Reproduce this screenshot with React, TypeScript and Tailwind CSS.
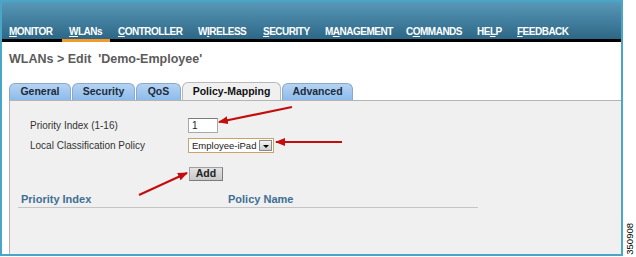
import React from "react";

const navItems: { pre: string; u: string; post: string; w: number }[] = [
  { pre: "", u: "M", post: "ONITOR", w: 60 },
  { pre: "", u: "W", post: "LANs", w: 49 },
  { pre: "", u: "C", post: "ONTROLLER", w: 80 },
  { pre: "W", u: "I", post: "RELESS", w: 65 },
  { pre: "", u: "S", post: "ECURITY", w: 62 },
  { pre: "M", u: "A", post: "NAGEMENT", w: 81 },
  { pre: "C", u: "O", post: "MMANDS", w: 71 },
  { pre: "HE", u: "L", post: "P", w: 40 },
  { pre: "", u: "F", post: "EEDBACK", w: 70 },
];

const tabs = [
  { label: "General", w: 62 },
  { label: "Security", w: 63 },
  { label: "QoS", w: 45 },
  { label: "Policy-Mapping", w: 99, active: true },
  { label: "Advanced", w: 71 },
];

export default function App() {
  return (
    <div
      className="w-[636px] h-[257px] bg-white flex relative overflow-hidden"
      style={{ fontFamily: '"Liberation Sans", Arial, sans-serif' }}
    >
      <div className="w-[623px] h-[256px] border-2 border-[#4aa6c6] flex flex-col bg-white">
        {/* header */}
        <div className="h-[37px] bg-gradient-to-b from-[#5898b8] to-[#2e6786] flex items-end pl-[7px] pb-[1px]">
          {navItems.map((n, i) => (
            <span
              key={i}
              className="text-white font-bold text-[10px] tracking-[-0.5px] leading-[13px] shrink-0 whitespace-nowrap"
              style={{ width: n.w }}
            >
              {n.pre}
              <span className="underline underline-offset-[1px]">{n.u}</span>
              {n.post}
            </span>
          ))}
        </div>
        <div className="h-[3px] bg-black flex">
          <div className="w-[60px]" />
          <div className="w-[48px] bg-[#f39a2a]" />
        </div>
        {/* title */}
        <div className="h-[41px] flex items-center pl-[7px] pb-[7px]">
          <span className="text-[12.5px] font-bold text-[#5b5b5b] whitespace-pre">
            {"WLANs > Edit  'Demo-Employee'"}
          </span>
        </div>
        {/* tabs */}
        <div className="flex pl-[7px] h-[17px] items-end">
          {tabs.map((t) => (
            <div
              key={t.label}
              className={
                "h-[17px] rounded-t-[6px] border border-b-0 flex items-center justify-center text-[10.5px] font-bold text-[#1c2c3c] shrink-0 mr-[1px] " +
                (t.active
                  ? "bg-[#f0f0f0] border-[#b8b8b8] h-[18px] text-[#111]"
                  : "bg-gradient-to-b from-[#b5d3f3] to-[#8dbbeb] border-[#8aa8c8]")
              }
              style={{ width: t.w }}
            >
              {t.label}
            </div>
          ))}
        </div>
        {/* content */}
        <div className="flex-1 ml-[7px] bg-[#f0f0f0] border-l border-t border-[#b4b4b4] flex flex-col">
          <div className="pl-[20px] pt-[17px] flex flex-col">
            <div className="flex items-center h-[15px]">
              <span className="w-[158px] text-[10px] text-[#333]">Priority Index (1-16)</span>
              <div className="w-[30px] h-[15px] bg-white border border-[#a8a8a8] border-t-[#7a7a7a] text-[10px] text-[#222] pl-[3px] leading-[13px]">
                1
              </div>
            </div>
            <div className="flex items-center h-[15px] mt-[5px]">
              <span className="w-[158px] text-[10px] text-[#333]">Local Classification Policy</span>
              <div className="w-[86px] h-[15px] bg-white border border-[#c9a46a] flex items-center">
                <span className="flex-1 text-[9.5px] text-[#222] pl-[3px] leading-[13px] whitespace-nowrap">Employee-iPad</span>
                <div className="w-[13px] h-[11px] mr-[1px] shrink-0 bg-gradient-to-b from-[#f4f4f4] to-[#cfcfcf] border border-[#8a8a8a] flex items-center justify-center">
                  <div className="w-0 h-0 border-l-[3px] border-r-[3px] border-t-[3px] border-l-transparent border-r-transparent border-t-black mt-[1px]" />
                </div>
              </div>
            </div>
            <div className="pl-[159px] mt-[14px]">
              <div className="w-[34px] h-[14px] bg-gradient-to-b from-[#e2e2e2] to-[#c8c8c8] border border-[#a0a0a0] border-r-[#7c7c7c] border-b-[#7c7c7c] flex items-center justify-center text-[10.5px] font-bold text-[#222]">
                Add
              </div>
            </div>
          </div>
          <div className="ml-[8px] mt-[12px] w-[460px] h-[15px] border-b border-[#c4c4c4] flex items-start text-[11px] font-bold text-[#3e6f94]">
            <span className="w-[210px] pl-[3px] leading-[12px]">Priority Index</span>
            <span className="leading-[12px]">Policy Name</span>
          </div>
        </div>
      </div>
      {/* side figure number */}
      <div className="flex-1 flex flex-col justify-end items-center pb-[2px]">
        <span className="text-[9.5px] text-black leading-none [writing-mode:vertical-rl] rotate-180">
          350908
        </span>
      </div>
      {/* arrows */}
      <svg className="absolute inset-0 pointer-events-none" width="636" height="257">
        <defs>
          <marker id="ah" markerWidth="10" markerHeight="8" refX="9" refY="4" orient="auto" markerUnits="userSpaceOnUse">
            <path d="M0,0 L10,4 L0,8 Z" fill="#c40d0d" />
          </marker>
        </defs>
        <line x1="292" y1="107" x2="219" y2="122" stroke="#c40d0d" strokeWidth="2.2" markerEnd="url(#ah)" />
        <line x1="342" y1="142" x2="276" y2="142" stroke="#c40d0d" strokeWidth="2.2" markerEnd="url(#ah)" />
        <line x1="139" y1="195" x2="187" y2="173" stroke="#c40d0d" strokeWidth="2.2" markerEnd="url(#ah)" />
      </svg>
    </div>
  );
}
